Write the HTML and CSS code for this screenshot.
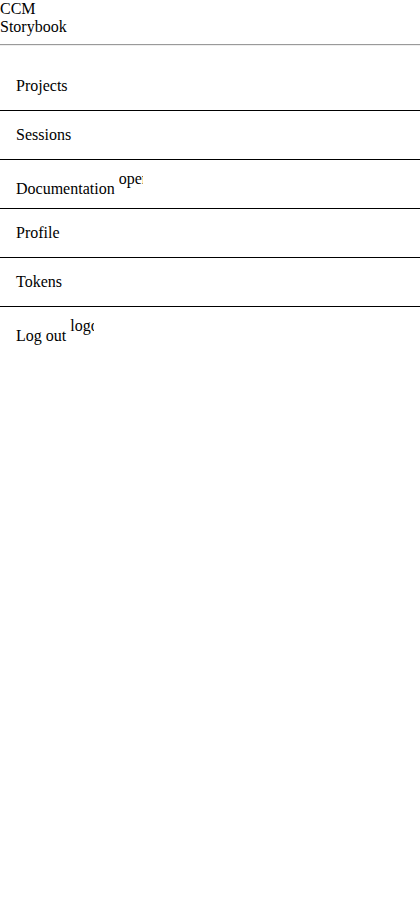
FILE: index.html
```html
<!DOCTYPE html>
<html lang="en">
<head>
<meta charset="utf-8">
<title>CCM Storybook</title>
<link rel="stylesheet" href="styles.css">
</head>
<body>
<header class="topbar">
  <div class="brand">CCM Storybook</div>
</header>
<hr class="divider">
<nav class="menu">
  <ul class="menu-list">
    <li><a class="menu-item" href="#"><span class="label">Projects</span></a></li>
    <li><a class="menu-item" href="#"><span class="label">Sessions</span></a></li>
    <li><a class="menu-item" href="#"><span class="label">Documentation <span class="icon">open_in_new</span></span></a></li>
    <li><a class="menu-item" href="#"><span class="label">Profile</span></a></li>
    <li><a class="menu-item" href="#"><span class="label">Tokens</span></a></li>
    <li><a class="menu-item last" href="#"><span class="label">Log out <span class="icon">logout</span></span></a></li>
  </ul>
</nav>
</body>
</html>
```
FILE: styles.css
```css
html, body {
  margin: 0;
  padding: 0;
  background: #fff;
}
body {
  font-family: "Liberation Serif", "Times New Roman", serif;
  font-size: 16px;
  color: #000;
}
.topbar {
  height: 44px;
}
.brand {
  width: min-content;
}
.divider {
  margin: 0;
  height: 0;
  border: none;
  border-top: 1px solid #9a9a9a;
  border-bottom: 1px solid #eeeeee;
}
.menu-list {
  list-style: none;
  margin: 16px 0 0;
  padding: 0;
}
.menu-item {
  display: flex;
  align-items: center;
  height: 48px;
  padding: 0 16px;
  border-bottom: 1px solid #000;
  color: #000;
  text-decoration: none;
}
.menu-item.last {
  border-bottom: none;
}
.icon {
  display: inline-block;
  width: 24px;
  height: 24px;
  overflow: hidden;
  white-space: nowrap;
}
```
